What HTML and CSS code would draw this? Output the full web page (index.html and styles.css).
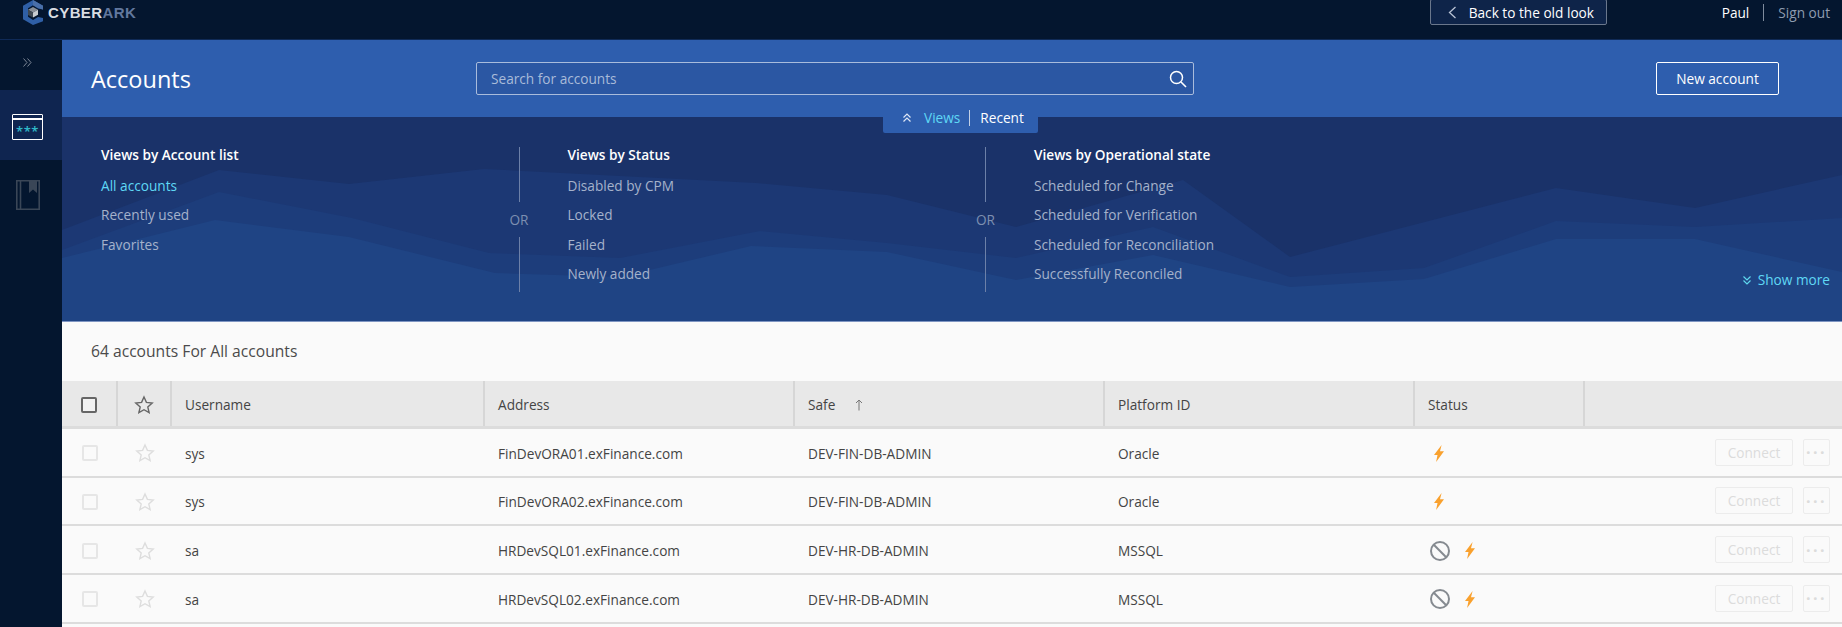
FILE: index.html
```html
<!DOCTYPE html>
<html lang="en">
<head>
<meta charset="utf-8">
<title>Accounts</title>
<link rel="stylesheet" href="styles.css">
</head>
<body>
<svg class="defs" width="0" height="0" aria-hidden="true">
  <symbol id="bolt" viewBox="0 0 10 17"><path d="M7.600 0 0 10h3.500L2.100 17 10 6.300H6z"/></symbol>
  <symbol id="star" viewBox="0 0 20 20"><path d="M10 2l2.400 5.400 5.800.6-4.400 3.900 1.300 5.800L10 14.700l-5.100 3 1.300-5.800L1.800 8l5.800-.6z"/></symbol>
</svg>
<header class="topbar">
  <div class="logo">
    <svg class="logo-mark" viewBox="0 0 22 25" width="22" height="25">
      <path d="M11 0 21 5.800v3.700l-5-.9-5-3.400-5 3v8.600l5 3.200 5-3 5 .9v3.400L11 25 1 19.200V5.800z" fill="#2f5fa6"/>
      <path d="M11 0 21 5.800v3.700L16 8.100 11 5.200z" fill="#4a6fa8"/>
      <path d="M11 7 16 9.700 11 12.500 6 9.700z" fill="#8a8f96"/>
      <path d="M6 9.700 11 12.500v5L6 15z" fill="#3f4852"/>
      <path d="M11 12.500l5-2.800v5L11 17.500z" fill="#c8ccd0"/>
    </svg>
    <span class="logo-text">CYBER<span class="logo-ark">ARK</span></span>
  </div>
  <button class="back-btn"><svg width="9" height="13" viewBox="0 0 9 13"><path d="M7.500 1 1.500 6.500l6 5.500" fill="none" stroke="#b9c3d4" stroke-width="1.300"/></svg><span>Back to the old look</span></button>
  <div class="user"><span class="user-name">Paul</span><span class="user-sep"></span><span class="sign-out">Sign out</span></div>
</header>
<div class="shell">
  <nav class="sidebar">
    <div class="toggle"><svg width="9" height="9" viewBox="0 0 9 9"><path d="M.5.500 4 4.500.5 8.500M4.500.5 8 4.500 4.500 8.500" fill="none" stroke="#7d8797" stroke-width="1"/></svg></div>
    <div class="nav-item active">
      <div class="acct-icon"><span>***</span></div>
    </div>
    <div class="nav-item">
      <svg width="24" height="30" viewBox="0 0 24 30"><path d="M.8.800h22.400v28.400H.8zM4.500.8v28.400" fill="none" stroke="#3a4657" stroke-width="1.600"/><path d="M13 1h8v12l-4-3.500L13 13z" fill="#3a4657"/></svg>
    </div>
  </nav>
  <main class="content">
    <section class="hero">
      <h1>Accounts</h1>
      <div class="search">
        <span>Search for accounts</span>
        <svg width="18" height="18" viewBox="0 0 18 18"><circle cx="7.500" cy="7.500" r="6" fill="none" stroke="#fff" stroke-width="1.500"/><path d="M12 12l5 5" stroke="#fff" stroke-width="1.600"/></svg>
      </div>
      <button class="new-btn">New account</button>
    </section>
    <section class="views">
      <svg class="ridges" viewBox="0 0 1780 204" preserveAspectRatio="none" aria-hidden="true">
        <path class="r1" d="M0 113 157 53 287 67 422 52 694 66 825 78 954 110 1121 63 1228 140 1494 71 1633 91 1780 58V204H0z"/>
        <path class="r2" d="M0 133 157 75 290 101 427 136 558 141 698 114 825 126 954 141 1091 110 1228 160 1362 151 1494 104 1633 110 1780 101V204H0z"/>
        <path class="r3" d="M0 141 153 103 287 120 433 156 558 160 689 129 825 135 954 163 1091 138 1228 170 1362 162 1494 122 1633 122 1780 155V204H0z"/>
      </svg>
      <div class="tab">
        <svg width="10" height="10" viewBox="0 0 10 10"><path d="M1.500 4.500 5 1l3.500 3.500M1.500 8.500 5 5l3.500 3.500" fill="none" stroke="#dfe7f5" stroke-width="1.200"/></svg>
        <span class="tab-on">Views</span><span class="tab-sep"></span><span class="tab-off">Recent</span>
      </div>
      <div class="view-cols">
        <div class="view-col">
          <h2>Views by Account list</h2>
          <a class="on">All accounts</a><a>Recently used</a><a>Favorites</a>
        </div>
        <div class="or"><i></i><span>OR</span><i></i></div>
        <div class="view-col">
          <h2>Views by Status</h2>
          <a>Disabled by CPM</a><a>Locked</a><a>Failed</a><a>Newly added</a>
        </div>
        <div class="or"><i></i><span>OR</span><i></i></div>
        <div class="view-col">
          <h2>Views by Operational state</h2>
          <a>Scheduled for Change</a><a>Scheduled for Verification</a><a>Scheduled for Reconciliation</a><a>Successfully Reconciled</a>
        </div>
      </div>
      <div class="more">
        <svg width="10" height="10" viewBox="0 0 10 10"><path d="M1.500 1.500 5 5l3.500-3.500M1.500 5.500 5 9l3.500-3.500" fill="none" stroke="#5fd8ee" stroke-width="1.200"/></svg>
        <span>Show more</span>
      </div>
    </section>
    <section class="list">
      <div class="count">64 accounts For All accounts</div>
      <div class="grid-row head">
        <div class="cell"><span class="check"></span></div>
        <div class="cell"><svg class="star" width="20" height="20"><use href="#star"/></svg></div>
        <div class="cell">Username</div>
        <div class="cell">Address</div>
        <div class="cell">Safe <svg class="sort" width="10" height="12" viewBox="0 0 10 12"><path d="M5 11.500V1M2 4l3-3 3 3" fill="none" stroke="#777" stroke-width="1"/></svg></div>
        <div class="cell">Platform ID</div>
        <div class="cell">Status</div>
        <div class="cell"></div>
      </div>
      <div class="grid-row">
        <div class="cell"><span class="check"></span></div>
        <div class="cell"><svg class="star" width="20" height="20"><use href="#star"/></svg></div>
        <div class="cell">sys</div><div class="cell">FinDevORA01.exFinance.com</div><div class="cell">DEV-FIN-DB-ADMIN</div><div class="cell">Oracle</div>
        <div class="cell status solo"><svg class="bolt" width="10" height="17"><use href="#bolt"/></svg></div>
        <div class="cell actions"><span class="connect">Connect</span><span class="dots">···</span></div>
      </div>
      <div class="grid-row">
        <div class="cell"><span class="check"></span></div>
        <div class="cell"><svg class="star" width="20" height="20"><use href="#star"/></svg></div>
        <div class="cell">sys</div><div class="cell">FinDevORA02.exFinance.com</div><div class="cell">DEV-FIN-DB-ADMIN</div><div class="cell">Oracle</div>
        <div class="cell status solo"><svg class="bolt" width="10" height="17"><use href="#bolt"/></svg></div>
        <div class="cell actions"><span class="connect">Connect</span><span class="dots">···</span></div>
      </div>
      <div class="grid-row">
        <div class="cell"><span class="check"></span></div>
        <div class="cell"><svg class="star" width="20" height="20"><use href="#star"/></svg></div>
        <div class="cell">sa</div><div class="cell">HRDevSQL01.exFinance.com</div><div class="cell">DEV-HR-DB-ADMIN</div><div class="cell">MSSQL</div>
        <div class="cell status"><svg class="ban" width="20" height="20" viewBox="0 0 20 20"><circle cx="10" cy="10" r="9"/><path d="M3.800 3.800l12.400 12.400"/></svg><svg class="bolt" width="10" height="17"><use href="#bolt"/></svg></div>
        <div class="cell actions"><span class="connect">Connect</span><span class="dots">···</span></div>
      </div>
      <div class="grid-row">
        <div class="cell"><span class="check"></span></div>
        <div class="cell"><svg class="star" width="20" height="20"><use href="#star"/></svg></div>
        <div class="cell">sa</div><div class="cell">HRDevSQL02.exFinance.com</div><div class="cell">DEV-HR-DB-ADMIN</div><div class="cell">MSSQL</div>
        <div class="cell status"><svg class="ban" width="20" height="20" viewBox="0 0 20 20"><circle cx="10" cy="10" r="9"/><path d="M3.800 3.800l12.400 12.400"/></svg><svg class="bolt" width="10" height="17"><use href="#bolt"/></svg></div>
        <div class="cell actions"><span class="connect">Connect</span><span class="dots">···</span></div>
      </div>
    </section>
  </main>
</div>
</body>
</html>
```
FILE: styles.css
```css
* { box-sizing: border-box; }
html, body { margin: 0; height: 100%; overflow: hidden; }
body { width: 1842px; height: 627px; background: #04162f; font-family: "Open Sans", sans-serif; font-size: 13.650px; color: #444; }
.defs { position: absolute; }
button { font-family: inherit; cursor: pointer; }

.topbar { height: 40px; display: flex; align-items: flex-start; padding-left: 22px; border-bottom: 1px solid #0f2a57; }
.logo { display: flex; align-items: center; gap: 4px; height: 25px; }
.logo-text { font-family: "Liberation Sans", sans-serif; font-weight: 700; font-size: 15px; letter-spacing: .4px; color: #d9dde2; }
.logo-ark { color: #62789e; }
.back-btn { margin-left: auto; width: 177px; height: 26px; margin-top: -1px; display: flex; align-items: center; gap: 12px; padding: 0 0 0 17px; background: #0e2449; border: 1px solid #6a778c; border-radius: 2px; color: #fff; font-size: 13.650px; }
.user { display: flex; align-items: center; height: 24px; margin-left: 115px; margin-right: 12px; font-size: 13.650px; }
.user-name { color: #fff; }
.user-sep { width: 1px; height: 17px; background: #7f8b9d; margin: 0 14px 0 14px; }
.sign-out { color: #8f9cb0; }

.shell { display: flex; height: 587px; }
.sidebar { width: 62px; flex: none; display: flex; flex-direction: column; }
.toggle { height: 50px; display: flex; align-items: center; justify-content: center; padding-right: 7px; padding-bottom: 5px; }
.nav-item { height: 70px; display: flex; align-items: center; justify-content: center; padding-right: 7px; }
.nav-item.active { background: #0f2550; }
.acct-icon { width: 31px; height: 26px; border: 1.500px solid #fff; border-radius: 1px; position: relative; display: flex; align-items: flex-end; justify-content: center; margin-top: 4px; }
.acct-icon::before { content: ""; position: absolute; left: 0; right: 0; top: 3px; height: 1.500px; background: #fff; }
.acct-icon span { color: #2fb9c9; font-size: 13px; line-height: 15px; letter-spacing: .6px; font-weight: 600; }

.content { flex: 1; min-width: 0; background: #fafafa; display: flex; flex-direction: column; }
.hero { height: 77px; background: #2e5eae; flex: none; display: flex; align-items: flex-start; padding: 22px 63px 0 29px; }
.hero h1 { margin: 0; width: 385px; font-size: 23.500px; font-weight: 400; color: #fff; line-height: 34px; }
.search { width: 718px; height: 33px; border: 1px solid #a9bcdc; border-radius: 2px; background: #2b57a3; display: flex; align-items: center; justify-content: space-between; padding: 0 6px 0 14px; color: #a9bbd9; font-size: 13.650px; }
.new-btn { margin-left: auto; width: 123px; height: 33px; border: 1px solid #fff; border-radius: 2px; background: transparent; color: #fff; font-size: 13.650px; }

.views { position: relative; height: 205px; flex: none; background: #1a3269; border-bottom: 1px solid #7e95c2; }
.ridges { position: absolute; inset: 0; width: 100%; height: 100%; }
.r1 { fill: #1c3874; }
.r2 { fill: #1d3d7b; }
.r3 { fill: #1f4484; }
.tab { position: absolute; left: 821px; top: -16px; width: 155px; height: 32px; background: #2e5eae; border-radius: 0 0 2px 2px; display: flex; align-items: flex-start; padding: 9px 0 0 19px; font-size: 13.650px; line-height: 16px; }
.tab svg { margin-top: 3px; }
.tab-on { color: #5fd8f5; margin-left: 12px; }
.tab-sep { width: 1px; height: 16px; background: #c3d0e6; margin: 0 10px 0 9px; }
.tab-off { color: #fff; }
.view-cols { position: relative; display: flex; padding: 28px 0 0 39px; }
.view-col { width: 388px; }
.view-col h2 { margin: 0 0 7px; font-size: 13.650px; font-weight: 600; line-height: 19px; color: #fff; }
.view-col a { display: block; height: 29.300px; line-height: 29.300px; color: #a5b2cb; font-size: 13.650px; }
.view-col a.on { color: #5fd8f5; }
.or { width: 60px; margin: 2px 18.500px 0 0; display: flex; flex-direction: column; align-items: center; height: 145px; color: #7d8fb1; font-size: 13.650px; }
.or i { display: block; width: 1px; height: 55px; background: #6c80a8; flex: none; }
.or span { flex: 1; display: flex; align-items: center; }
.more { position: absolute; right: 12px; top: 153px; display: flex; align-items: center; gap: 6px; color: #5fd8f5; font-size: 13.650px; }

.list { flex: 1; }
.count { height: 59px; padding: 0 0 2px 29px; display: flex; align-items: center; font-size: 15.650px; color: #4b4b4b; }
.grid-row { display: grid; grid-template-columns: 56px 54px 313px 310px 310px 310px 170px 257px; height: 48.670px; border-bottom: 2px solid #dcdcdc; align-items: stretch; color: #444; }
.grid-row.head { height: 48px; background: #e8e8e8; border-bottom: 3px solid #dcdcdc; }
.head .cell { border-right: 2px solid #d6d6d6; padding-left: 13px; }
.head .cell:last-child { border-right: 0; }
.cell { display: flex; align-items: center; padding: 2px 0 0 13px; font-size: 13.650px; min-width: 0; }
.grid-row .cell:nth-child(-n+2) { justify-content: center; padding-left: 0; }
.check { width: 16px; height: 16px; border: 2px solid #e6e6e6; border-radius: 2px; background: #fafafa; }
.head .check { border-color: #666; background: #f2f2f2; }
.star { fill: none; stroke: #dddddd; stroke-width: 1.400; }
.head .star { stroke: #666; }
.sort { margin-left: 19px; }
.status { gap: 15px; padding-left: 15px; }
.status.solo { padding-left: 19px; }
.bolt { fill: #f9a12e; }
.ban { fill: none; stroke: #858a90; stroke-width: 2; }
.actions { justify-content: flex-end; gap: 10px; padding-right: 12px; padding-top: 0; }
.connect, .dots { height: 27px; border: 1px solid #ececec; border-radius: 2px; color: #dcdcdc; display: flex; align-items: center; justify-content: center; font-size: 13.650px; }
.connect { width: 78px; }
.dots { width: 27px; font-weight: 700; font-size: 16px; letter-spacing: 2.500px; }
```
